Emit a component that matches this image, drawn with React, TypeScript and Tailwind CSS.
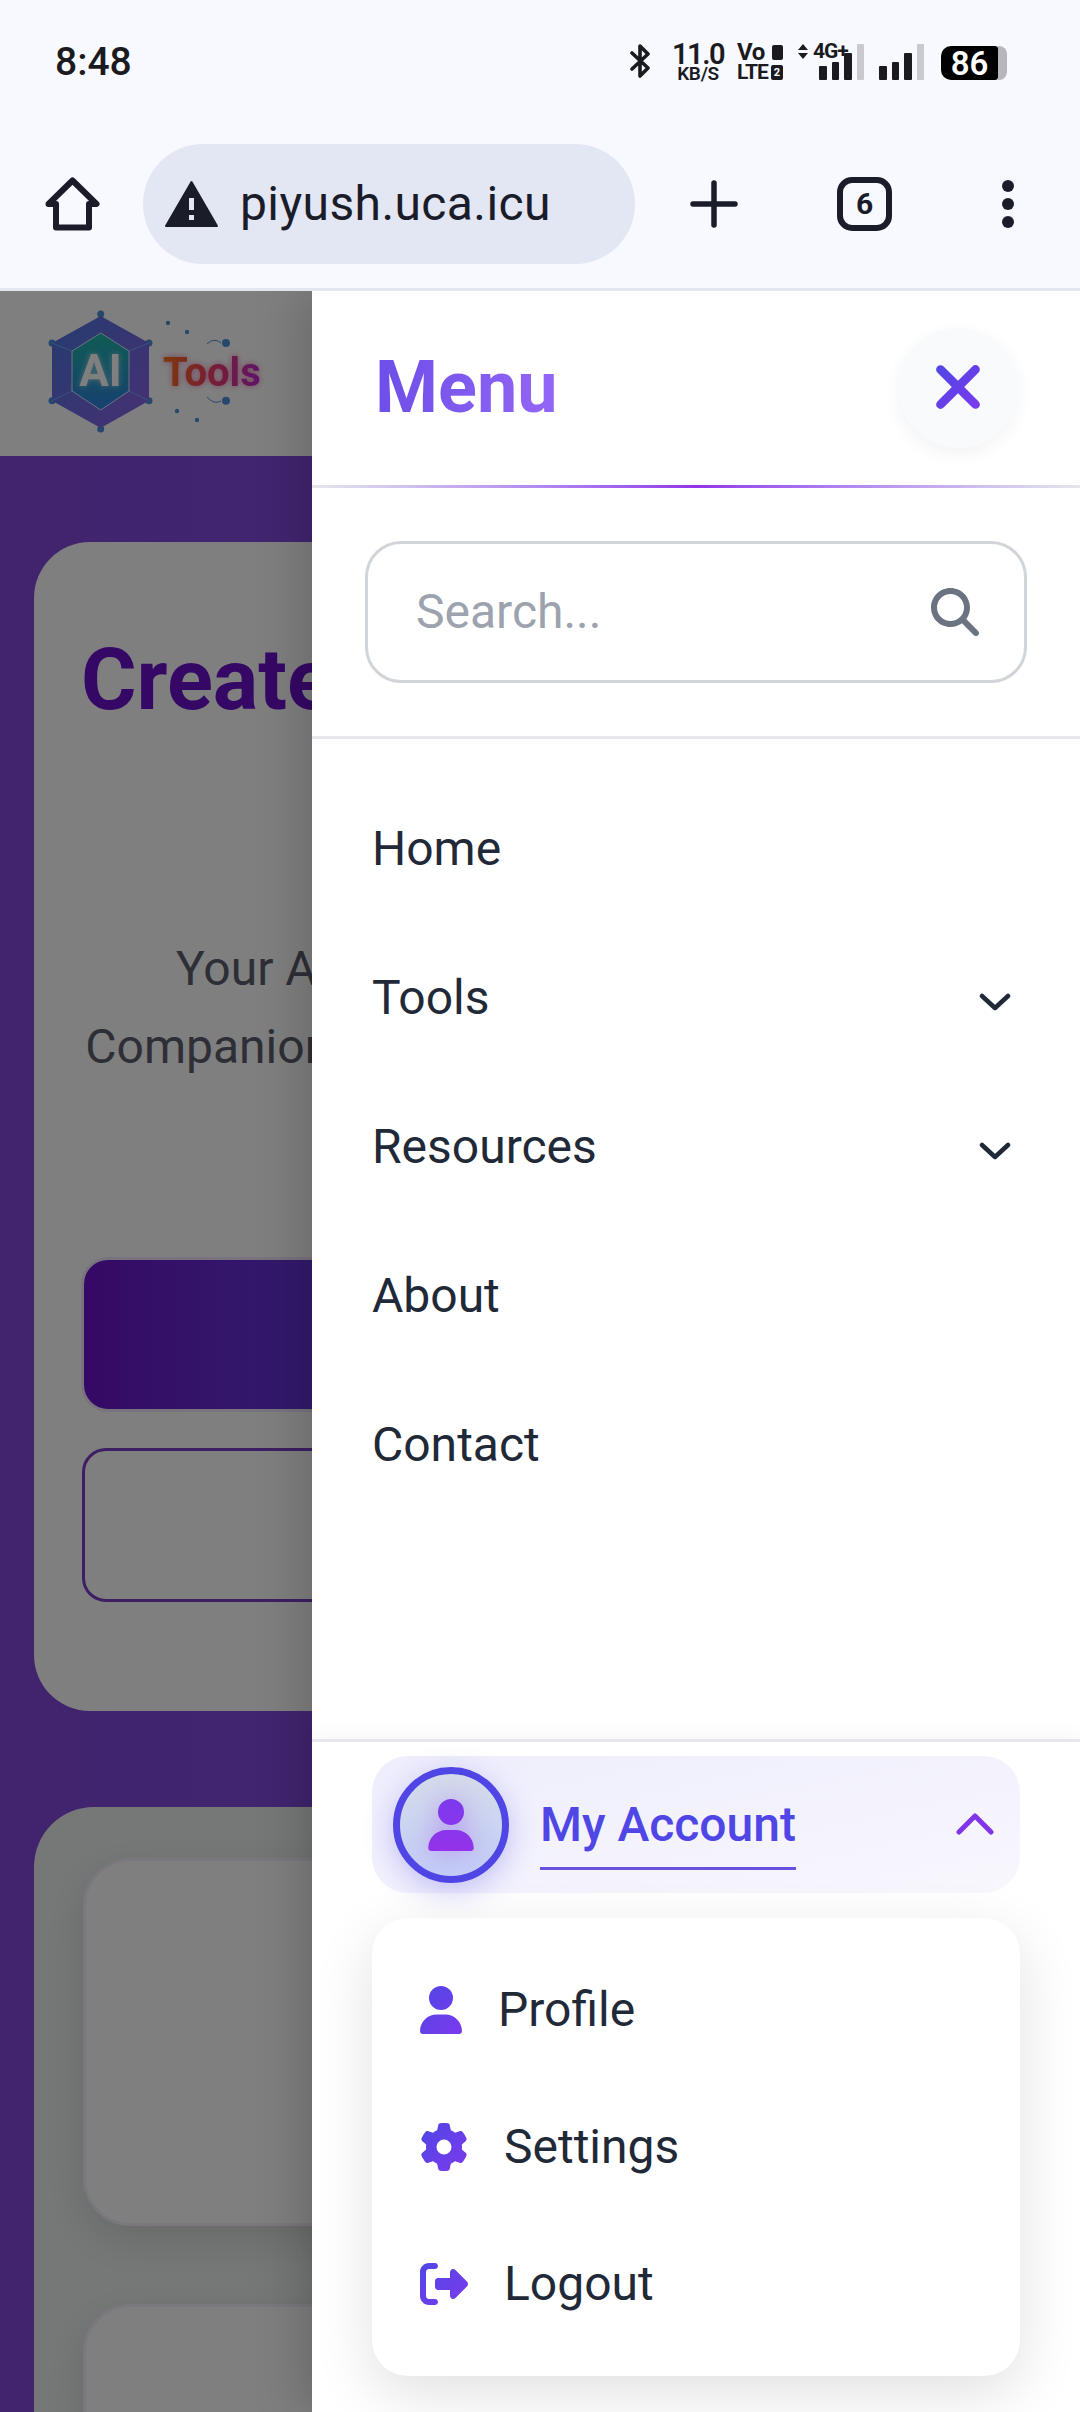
import { FaGear, FaMagnifyingGlass, FaRightFromBracket, FaUser, FaXmark } from "react-icons/fa6";

const navItems = [
  { label: "Home", arrow: false },
  { label: "Tools", arrow: true },
  { label: "Resources", arrow: true },
  { label: "About", arrow: false },
  { label: "Contact", arrow: false },
];

function Gradients() {
  return (
    <svg className="absolute h-0 w-0" aria-hidden="true">
      <defs>
        <linearGradient id="violet" x1="0" y1="0" x2="1" y2="1">
          <stop offset="0%" stopColor="#4f46e5" />
          <stop offset="100%" stopColor="#7c3aed" />
        </linearGradient>
        <linearGradient id="avatar" x1="0" y1="0" x2="0" y2="1">
          <stop offset="0%" stopColor="#7c3aed" />
          <stop offset="100%" stopColor="#9333ea" />
        </linearGradient>
        <linearGradient id="hexOuter" x1="0" y1="0" x2="1" y2="1">
          <stop offset="0%" stopColor="#4a78e0" />
          <stop offset="100%" stopColor="#9060e8" />
        </linearGradient>
        <linearGradient id="hexInner" x1="0" y1="0" x2="0" y2="1">
          <stop offset="0%" stopColor="#1fb8a8" />
          <stop offset="100%" stopColor="#2f80e0" />
        </linearGradient>
        <linearGradient id="toolsText" x1="0" y1="0" x2="1" y2="0">
          <stop offset="0%" stopColor="#f97316" />
          <stop offset="45%" stopColor="#f43f5e" />
          <stop offset="100%" stopColor="#c026d3" />
        </linearGradient>
      </defs>
    </svg>
  );
}

function StatusBar() {
  return (
    <div className="flex h-[120px] items-start justify-between pl-[55px] pr-[73px] pt-[43px] text-[#1b1b1f]">
      <span className="mt-[1px] text-[39px] font-medium leading-[37px]">8:48</span>
      <div className="flex h-[37px] items-stretch">
        <svg viewBox="0 0 21 36" className="h-[36px] w-[21px]" fill="none" stroke="#1b1b1f" strokeWidth="3.6" strokeLinejoin="round" strokeLinecap="round">
          <path d="M2 10 L18 25 L10 33 V3 L18 11 L2 26" />
        </svg>
        <div className="ml-[23px] flex w-[48px] flex-col items-center font-semibold">
          <span className="text-[29px] leading-[22px] tracking-[-1.5px]">11.0</span>
          <span className="mt-[2px] text-[19px] leading-[14px] tracking-[-0.3px]">KB/S</span>
        </div>
        <div className="ml-[15px] flex w-[46px] flex-col justify-between font-bold">
          <div className="flex items-center justify-between">
            <span className="text-[24px] leading-[18px] tracking-[-0.5px]">Vo</span>
            <span className="h-[15px] w-[11px] rounded-[2px] bg-[#1b1b1f]" />
          </div>
          <div className="flex items-center justify-between">
            <span className="text-[21px] leading-[15px] tracking-[-1px]">LTE</span>
            <span className="flex h-[15px] w-[12px] items-center justify-center rounded-[2px] bg-[#1b1b1f] text-[11px] leading-none text-white">2</span>
          </div>
        </div>
        <div className="ml-[15px] flex w-[10px] flex-col gap-[3px] pt-[1px]">
          <span className="h-0 w-0 border-x-[5px] border-b-[6px] border-x-transparent border-b-[#1b1b1f]" />
          <span className="h-0 w-0 border-x-[5px] border-t-[6px] border-x-transparent border-t-[#1b1b1f]" />
        </div>
        <div className="relative ml-[5px] flex w-[51px] justify-end">
          <span className="absolute left-0 top-0 text-[21px] font-bold leading-[17px] tracking-[-1px]">4G+</span>
          <SignalBars />
        </div>
        <div className="ml-[15px] flex">
          <SignalBars />
        </div>
        <div className="ml-[17px] flex items-center self-end">
          <div className="flex h-[34px] w-[57px] items-center justify-center rounded-l-[10px] rounded-r-[3px] bg-black text-[33px] font-semibold leading-none text-white">86</div>
          <div className="h-[34px] w-[9px] rounded-r-[8px] bg-[#b8b6bd]" />
        </div>
      </div>
    </div>
  );
}

function SignalBars() {
  return (
    <div className="flex h-[37px] w-[45px] items-end justify-between">
      <span className="h-[14px] w-[7.5px] rounded-[1px] bg-[#1b1b1f]" />
      <span className="h-[18px] w-[7.5px] rounded-[1px] bg-[#1b1b1f]" />
      <span className="h-[27px] w-[7.5px] rounded-[1px] bg-[#1b1b1f]" />
      <span className="h-[36px] w-[7.5px] rounded-[1px] bg-[#cbc9d0]" />
    </div>
  );
}

function Toolbar() {
  return (
    <div className="flex h-[171px] items-center border-b-[3px] border-[#e3e5f0] pl-[45px] text-[#1a1c2a]">
      <svg viewBox="0 0 55 54" className="h-[54px] w-[55px]" fill="none" stroke="#1a1c2a" strokeWidth="6" strokeLinejoin="round" strokeLinecap="round">
        <path d="M27.5 3.5 L51.5 27 H44 V50.5 H11 V27 H3.5 Z" />
      </svg>
      <div className="ml-[43px] flex h-[120px] w-[492px] items-center rounded-full bg-[#e3e6f3] pl-[21px]">
        <svg viewBox="0 0 55 48" className="h-[48px] w-[55px]">
          <path d="M27.5 2 L53 46 H2 Z" fill="#1a1c2a" stroke="#1a1c2a" strokeWidth="2" strokeLinejoin="round" />
          <rect x="25" y="18" width="5" height="12" fill="#e3e6f3" />
          <rect x="25" y="35" width="5" height="5" fill="#e3e6f3" />
        </svg>
        <span className="ml-[21px] text-[48px] leading-none tracking-[0.4px]">piyush.uca.icu</span>
      </div>
      <svg viewBox="0 0 48 48" className="ml-[55px] h-[48px] w-[48px]" stroke="#1a1c2a" strokeWidth="5.5" strokeLinecap="round">
        <path d="M24 3 V45 M3 24 H45" />
      </svg>
      <div className="ml-[99px] flex h-[54px] w-[55px] items-center justify-center rounded-[15px] border-[6px] border-[#1a1c2a] text-[30px] font-bold leading-none">6</div>
      <div className="ml-[110px] flex h-[48px] w-[12px] flex-col justify-between">
        <span className="h-[12px] w-[12px] rounded-full bg-[#1a1c2a]" />
        <span className="h-[12px] w-[12px] rounded-full bg-[#1a1c2a]" />
        <span className="h-[12px] w-[12px] rounded-full bg-[#1a1c2a]" />
      </div>
    </div>
  );
}

function Logo() {
  return (
    <svg viewBox="46 308 224 126" className="h-[126px] w-[224px]">
      <g fill="#4f8fd8">
        <circle cx="100.7" cy="314" r="3.5" />
        <circle cx="52" cy="343" r="3.5" />
        <circle cx="149" cy="343" r="3.5" />
        <circle cx="149" cy="400.7" r="3.5" />
        <circle cx="52" cy="400.7" r="3.5" />
        <circle cx="100.7" cy="429" r="3.5" />
        <circle cx="168" cy="323" r="2.2" />
        <circle cx="187" cy="332" r="2.2" />
        <circle cx="226" cy="343" r="4" />
        <circle cx="226" cy="400.7" r="4" />
        <circle cx="177" cy="411" r="2.2" />
        <circle cx="197" cy="420" r="2.2" />
      </g>
      <path d="M100.7 316 L149 343 V400.7 L100.7 428 L52 400.7 V343 Z" fill="url(#hexOuter)" />
      <path d="M52 343 L72 351 M149 343 L129 351 M52 400.7 L72 391 M149 400.7 L129 391" stroke="#6ea8f7" strokeWidth="1" />
      <path d="M100.7 333 L129 351 V391 L100.7 410 L72 391 V351 Z" fill="url(#hexInner)" stroke="#d8e8ff" strokeWidth="1" />
      <text x="100.5" y="386" textAnchor="middle" fontSize="44" fontWeight="700" fill="#ffffff" className="[filter:drop-shadow(0_0_3px_rgba(255,255,255,0.6))]">AI</text>
      <text x="163" y="386" fontSize="40" fontWeight="700" fill="url(#toolsText)" className="[filter:drop-shadow(0_0_3px_rgba(236,72,153,0.7))]">Tools</text>
      <path d="M207 344 Q214 337 221 343 M207 397 Q214 405 221 401" fill="none" stroke="#4f8fd8" strokeWidth="1" />
    </svg>
  );
}

function Page() {
  return (
    <div className="h-full bg-white">
      <div className="flex h-[165px] items-start pl-[46px] pt-[17px]">
        <Logo />
      </div>
      <div className="h-full bg-linear-to-r from-[#8448dc] to-[#7c50ea] px-[34px] pt-[86px]">
        <div className="flex h-[1169px] flex-col rounded-[56px] bg-white px-[50px] pt-[90px]">
          <h1 className="-ml-[3px] whitespace-nowrap text-[85px] font-bold leading-[96px] text-[#6a11cb]">Create Smarter</h1>
          <p className="mt-[202px] whitespace-nowrap text-center text-[48px] leading-[78px] text-[#5c5c6c]">
            Your AI-Powered Productivity Hub,
            <br />
            Companion for Smarter and Faster Results
          </p>
          <div className="mt-[174px] h-[149px] rounded-[24px] bg-linear-to-r from-[#6a11cb] to-[#2575fc] shadow-[0_0_0_3px_rgba(106,17,203,0.1)]" />
          <div className="-mx-[2px] mt-[39px] h-[154px] rounded-[24px] border-[3px] border-[#7d3fc7]" />
        </div>
        <div className="mt-[96px] flex flex-col gap-[78px] rounded-t-[60px] bg-[#edf0f0] px-[49px] pt-[51px]">
          <div className="h-[368px] rounded-[48px] border-[3px] border-[#f6f0fa] bg-white shadow-[0_15px_45px_rgba(0,0,0,0.12)]" />
          <div className="h-[368px] rounded-[48px] border-[3px] border-[#f6f0fa] bg-white shadow-[0_15px_45px_rgba(0,0,0,0.12)]" />
        </div>
      </div>
    </div>
  );
}

function Chevron() {
  return (
    <svg viewBox="0 0 32 18" className="mt-[8px] h-[18px] w-[32px]" fill="none" stroke="#1f2937" strokeWidth="4.5" strokeLinecap="round" strokeLinejoin="round">
      <path d="M3 3 L16 15 L29 3" />
    </svg>
  );
}

function MenuPanel() {
  return (
    <aside className="absolute bottom-0 right-0 top-0 flex w-[768px] flex-col bg-white shadow-[-12px_0_45px_rgba(0,0,0,0.16)]">
      <div className="flex h-[194px] items-center justify-between pl-[63px] pr-[62px]">
        <span className="bg-linear-to-r from-[#6d4ee8] to-[#9566f5] bg-clip-text text-[72px] font-bold leading-none text-transparent">Menu</span>
        <button className="flex h-[120px] w-[120px] items-center justify-center rounded-full bg-[#f9fafb] pb-[2px] shadow-[0_6px_18px_rgba(0,0,0,0.05)]">
          <FaXmark size={70} fill="url(#violet)" />
        </button>
      </div>
      <div className="h-[3px] bg-linear-to-r from-[#e5e7eb] via-[#9333ea] to-[#e5e7eb]" />
      <div className="border-b-[3px] border-[#e5e7eb] px-[53px] py-[53px]">
        <div className="flex h-[142px] items-center justify-between rounded-[36px] border-[3px] border-[#d1d5db] pl-[48px] pr-[45px]">
          <span className="text-[48px] leading-none text-[#9ca3af]">Search...</span>
          <FaMagnifyingGlass size={48} className="text-[#6b7280]" />
        </div>
      </div>
      <nav className="flex-1 pt-[35px]">
        {navItems.map((item) => (
          <div key={item.label} className="flex h-[149px] items-center justify-between pl-[60px] pr-[69px] text-[48px] text-[#1f2937]">
            <span>{item.label}</span>
            {item.arrow && <Chevron />}
          </div>
        ))}
      </nav>
      <div className="border-t-[3px] border-[#e5e7eb] px-[60px] pb-[36px] pt-[14px] shadow-[0_-6px_18px_rgba(0,0,0,0.03)]">
        <div className="flex h-[137px] items-center rounded-[36px] bg-linear-to-br from-[#eeeefc] to-[#f8f7fe] pl-[21px] pr-[26px]">
          <div className="flex h-[116px] w-[116px] items-center justify-center rounded-full border-[7px] border-[#4f46e5] bg-linear-to-b from-[#d5dcea] to-[#c3cdf7] shadow-[0_8px_30px_rgba(79,70,229,0.3)]">
            <FaUser size={52} fill="url(#avatar)" className="[filter:drop-shadow(0_0_14px_rgba(147,51,234,0.4))]" />
          </div>
          <div className="ml-[31px] border-b-[3px] border-[#6a50e0] pb-[14px] pt-[17px]">
            <span className="block text-[48px] font-medium leading-[56px] text-[#4f46e5]">My Account</span>
          </div>
          <svg viewBox="0 0 38 22" className="ml-auto -mt-[2px] h-[22px] w-[38px]" fill="none" stroke="#8035e8" strokeWidth="5" strokeLinecap="round" strokeLinejoin="round">
            <path d="M3 19 L19 3 L35 19" />
          </svg>
        </div>
        <div className="mt-[25px] rounded-[36px] bg-white py-[23.5px] pl-[48px] shadow-[0_18px_60px_rgba(0,0,0,0.12)]">
          <div className="flex h-[137px] items-center gap-[36px] text-[48px] text-[#1f2937]">
            <FaUser fill="url(#violet)" className="h-[48px] w-[42px]" />
            <span>Profile</span>
          </div>
          <div className="flex h-[137px] items-center gap-[36px] text-[48px] text-[#1f2937]">
            <FaGear size={48} fill="url(#violet)" />
            <span>Settings</span>
          </div>
          <div className="flex h-[137px] items-center gap-[36px] text-[48px] text-[#1f2937]">
            <FaRightFromBracket size={48} fill="url(#violet)" />
            <span>Logout</span>
          </div>
        </div>
      </div>
    </aside>
  );
}

export default function App() {
  return (
    <div className="flex h-[2412px] w-[1080px] flex-col overflow-hidden bg-[#f8f8ff] [font-family:Roboto,sans-serif]">
      <Gradients />
      <StatusBar />
      <Toolbar />
      <div className="relative flex-1 overflow-hidden">
        <Page />
        <div className="absolute inset-0 bg-black/50" />
        <MenuPanel />
      </div>
    </div>
  );
}
